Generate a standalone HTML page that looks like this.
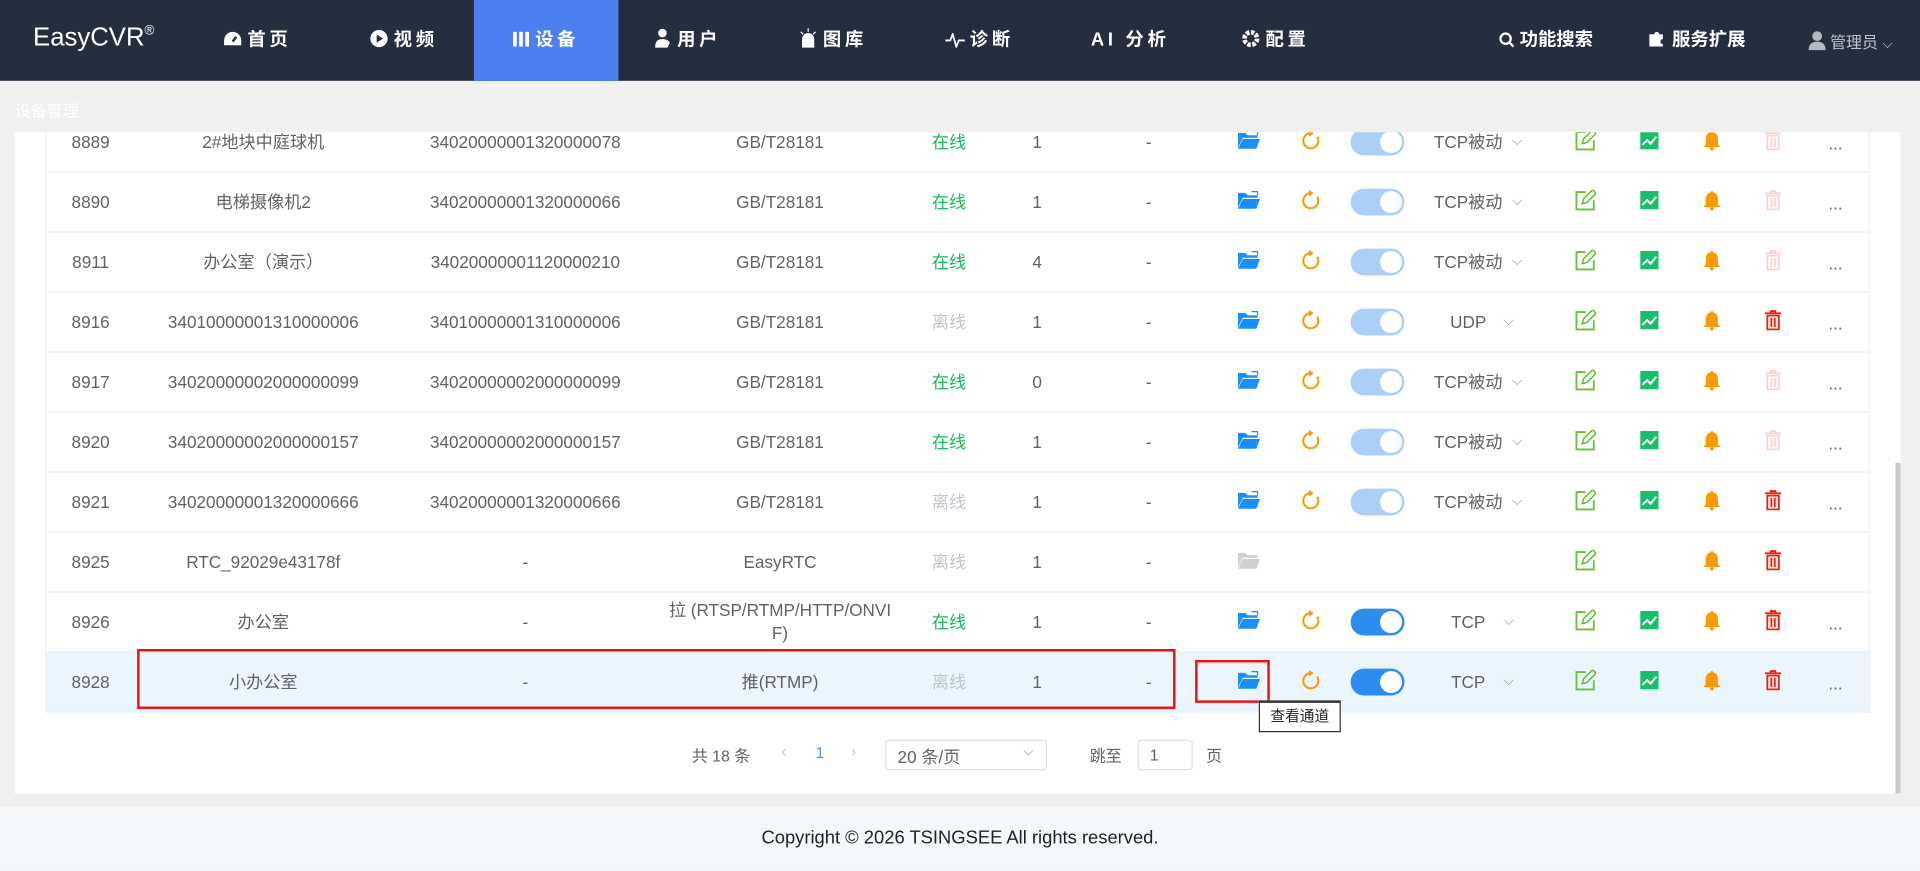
<!DOCTYPE html>
<html><head><meta charset="utf-8">
<style>
*{margin:0;padding:0;box-sizing:border-box}
html,body{width:1920px;height:869px;overflow:hidden;background:#f0f0f0}
#w{position:absolute;left:0;top:0;width:1568px;height:711px;transform:scale(1.22449);transform-origin:0 0;font-family:"Liberation Sans","Noto Sans CJK SC",sans-serif;color:#606266;font-size:14px}
.hd{position:absolute;left:0;top:0;width:1568px;height:66px;background:#252e3e;color:#fff}
.logo{position:absolute;left:27px;top:19px;font-size:21px;color:#fff}
.logo sup{font-size:11px;vertical-align:9px}
.nav{position:absolute;top:0;height:66px;line-height:66px;font-size:15px;font-weight:bold;letter-spacing:3px;text-align:center;color:#fff}
.nav svg{vertical-align:-2px;margin-right:4px}
.act{background:#4e7ff0}
.sub{position:absolute;left:12px;top:80px;font-size:13px;color:#fff}
.panel{position:absolute;left:12px;top:108px;width:1540px;height:540px;background:#fff;overflow:hidden}
.tbl{position:absolute;left:25px;top:-16px;width:1490px;height:490px;border-left:1px solid #ebeef5;border-right:1px solid #ebeef5}
.r{position:absolute;left:0;width:1489px;height:49px;border-bottom:1px solid #ebeef5}
.r span,.r i{position:absolute;top:50%;transform:translate(-50%,-50%);white-space:nowrap;font-style:normal}
.r .d{top:53%}
.on{color:#19b85a}.off{color:#c0c4cc}
.tg{width:44px;height:22px;border-radius:11px;background:#abcff5}
.tg:after{content:"";position:absolute;right:2px;top:2px;width:18px;height:18px;border-radius:50%;background:#fff}
.tg.b{background:#2d8cf0}
.ar{color:#909399;font-size:11px}
.scr{position:absolute;left:1548px;top:378px;width:4px;height:270px;background:#c9c9c9}
.foot{position:absolute;left:0;top:659px;width:1568px;height:52px;background:#f5f8fb;text-align:center;line-height:52px;font-size:15px;color:#222}
</style></head><body><div id="w">
<div class="hd">
<div class="logo">EasyCVR<sup>®</sup></div>
<div class="nav" style="left:170px;width:80px"><svg width="16" height="14" viewBox="0 0 16 14"><path d="M8 1a7 7 0 0 0-7 7v4h14V8a7 7 0 0 0-7-7z" fill="#fff"/><path d="M8 9l3-4" stroke="#252e3e" stroke-width="2"/></svg>首页</div>
<div class="nav" style="left:290px;width:80px"><svg width="15" height="15" viewBox="0 0 16 16"><circle cx="8" cy="8" r="7.5" fill="#fff"/><path d="M6 4.5v7l5.5-3.5z" fill="#252e3e"/></svg>视频</div>
<div class="nav act" style="left:387px;width:118px"><svg width="14" height="14" viewBox="0 0 14 14"><rect x="0" y="1" width="3" height="12" fill="#fff"/><rect x="5" y="1" width="3" height="12" fill="#fff"/><rect x="10" y="1" width="3" height="12" fill="#fff"/></svg>设备</div>
<div class="nav" style="left:522px;width:80px"><svg width="14" height="16" viewBox="0 0 14 16"><circle cx="6" cy="4" r="3.5" fill="#fff"/><path d="M0 16c0-6 3-7 6-7s5 1 6 3l-2 4z" fill="#fff"/></svg>用户</div>
<div class="nav" style="left:640px;width:80px"><svg width="16" height="16" viewBox="0 0 16 16"><path d="M3 15h10M4 14V9a4 4 0 0 1 8 0v5z" stroke="#fff" stroke-width="2" fill="#fff"/><path d="M8 0v3M2 3l2 2M14 3l-2 2" stroke="#fff"/></svg>图库</div>
<div class="nav" style="left:760px;width:80px"><svg width="16" height="12" viewBox="0 0 16 12"><path d="M0 6h4l2-5 3 10 2-5h5" stroke="#fff" stroke-width="1.5" fill="none"/></svg>诊断</div>
<div class="nav" style="left:878px;width:90px">AI 分析</div>
<div class="nav" style="left:1002px;width:80px"><svg width="15" height="15" viewBox="0 0 16 16"><circle cx="8" cy="8" r="5.5" fill="none" stroke="#fff" stroke-width="4" stroke-dasharray="3 1.3"/><circle cx="8" cy="8" r="2" fill="#252e3e"/></svg>配置</div>
<div class="nav" style="left:1215px;width:95px;letter-spacing:0"><svg width="13" height="13" viewBox="0 0 14 14"><circle cx="6" cy="6" r="4.5" stroke="#fff" stroke-width="2" fill="none"/><path d="M9 9l4 4" stroke="#fff" stroke-width="2"/></svg>功能搜索</div>
<div class="nav" style="left:1338px;width:95px;letter-spacing:0"><svg width="16" height="16" viewBox="0 0 16 16"><path d="M2 5h4a2 2 0 1 1 4 0h3v4a2 2 0 1 0 0 4v2H2z" fill="#fff"/></svg>服务扩展</div>
<div style="position:absolute;left:1477px;top:24px;color:#c0c4cc;font-size:13px"><svg width="14" height="16" viewBox="0 0 14 16" style="vertical-align:-2px"><circle cx="7" cy="4.5" r="4" fill="#b4b8c0"/><path d="M0 16c0-5 3-7 7-7s7 2 7 7z" fill="#b4b8c0"/></svg> 管理员 <span style="font-size:11px">⌵</span></div>
</div>
<div class="sub">设备管理</div>
<div class="panel">
<div class="tbl">

<div class="r" style="top:0"><span style="left:36px">8889</span><span style="left:177px">2#地块中庭球机</span><span style="left:391px">34020000001320000078</span><span style="left:599px">GB/T28181</span><span class="on" style="left:737px">在线</span><span style="left:809px">1</span><span style="left:900px">-</span><i style="left:982px"><svg width="18" height="16" viewBox="0 0 18 16"><path d="M0 2h6l2 2h8v2H4L0 14z" fill="#1890ff"/><path d="M4 7h14l-3 8H0z" fill="#1890ff"/><path d="M11 1h5v3" stroke="#1890ff" fill="none"/></svg></i><i style="left:1032px"><svg width="17" height="17" viewBox="0 0 18 18"><path d="M10 3A6.5 6.5 0 1 0 15 6" stroke="#ff9900" stroke-width="1.8" fill="none"/><path d="M8 0l4 3-4 3z" fill="#ff9900"/></svg></i><i class="tg" style="left:1087px"></i><span style="left:1161px">TCP被动</span><span class="ar" style="left:1201px">⌵</span><i style="left:1257px"><svg width="17" height="17" viewBox="0 0 18 18"><path d="M9 2H1v15h15V9" stroke="#67c23a" stroke-width="1.6" fill="none"/><path d="M6 12l1-4 8-8 3 3-8 8z" stroke="#67c23a" stroke-width="1.4" fill="none"/></svg></i><i style="left:1309px"><svg width="15" height="15" viewBox="0 0 16 16"><rect width="16" height="16" fill="#19be6b"/><path d="M2 12l4-4 3 3 5-6" stroke="#fff" stroke-width="1.8" fill="none"/></svg></i><i style="left:1360px"><svg width="16" height="17" viewBox="0 0 16 17"><path d="M8 1a1 1 0 0 1 1 1 5 5 0 0 1 4 5v5l2 2H1l2-2V7a5 5 0 0 1 4-5 1 1 0 0 1 1-1z" fill="#ff9900"/><circle cx="8" cy="15.5" r="1.5" fill="#ff9900"/></svg></i><i style="left:1410px"><svg width="15" height="17" viewBox="0 0 16 18"><path d="M1 3h14M6 3V1h4v2M3 5h10v12H3zM6.5 7v8M9.5 7v8" stroke="#fcd3d3" stroke-width="1.6" fill="none"/></svg></i><span class="d" style="left:1461px">...</span></div>

<div class="r" style="top:49px"><span style="left:36px">8890</span><span style="left:177px">电梯摄像机2</span><span style="left:391px">34020000001320000066</span><span style="left:599px">GB/T28181</span><span class="on" style="left:737px">在线</span><span style="left:809px">1</span><span style="left:900px">-</span><i style="left:982px"><svg width="18" height="16" viewBox="0 0 18 16"><path d="M0 2h6l2 2h8v2H4L0 14z" fill="#1890ff"/><path d="M4 7h14l-3 8H0z" fill="#1890ff"/><path d="M11 1h5v3" stroke="#1890ff" fill="none"/></svg></i><i style="left:1032px"><svg width="17" height="17" viewBox="0 0 18 18"><path d="M10 3A6.5 6.5 0 1 0 15 6" stroke="#ff9900" stroke-width="1.8" fill="none"/><path d="M8 0l4 3-4 3z" fill="#ff9900"/></svg></i><i class="tg" style="left:1087px"></i><span style="left:1161px">TCP被动</span><span class="ar" style="left:1201px">⌵</span><i style="left:1257px"><svg width="17" height="17" viewBox="0 0 18 18"><path d="M9 2H1v15h15V9" stroke="#67c23a" stroke-width="1.6" fill="none"/><path d="M6 12l1-4 8-8 3 3-8 8z" stroke="#67c23a" stroke-width="1.4" fill="none"/></svg></i><i style="left:1309px"><svg width="15" height="15" viewBox="0 0 16 16"><rect width="16" height="16" fill="#19be6b"/><path d="M2 12l4-4 3 3 5-6" stroke="#fff" stroke-width="1.8" fill="none"/></svg></i><i style="left:1360px"><svg width="16" height="17" viewBox="0 0 16 17"><path d="M8 1a1 1 0 0 1 1 1 5 5 0 0 1 4 5v5l2 2H1l2-2V7a5 5 0 0 1 4-5 1 1 0 0 1 1-1z" fill="#ff9900"/><circle cx="8" cy="15.5" r="1.5" fill="#ff9900"/></svg></i><i style="left:1410px"><svg width="15" height="17" viewBox="0 0 16 18"><path d="M1 3h14M6 3V1h4v2M3 5h10v12H3zM6.5 7v8M9.5 7v8" stroke="#fcd3d3" stroke-width="1.6" fill="none"/></svg></i><span class="d" style="left:1461px">...</span></div>

<div class="r" style="top:98px"><span style="left:36px">8911</span><span style="left:177px">办公室（演示）</span><span style="left:391px">34020000001120000210</span><span style="left:599px">GB/T28181</span><span class="on" style="left:737px">在线</span><span style="left:809px">4</span><span style="left:900px">-</span><i style="left:982px"><svg width="18" height="16" viewBox="0 0 18 16"><path d="M0 2h6l2 2h8v2H4L0 14z" fill="#1890ff"/><path d="M4 7h14l-3 8H0z" fill="#1890ff"/><path d="M11 1h5v3" stroke="#1890ff" fill="none"/></svg></i><i style="left:1032px"><svg width="17" height="17" viewBox="0 0 18 18"><path d="M10 3A6.5 6.5 0 1 0 15 6" stroke="#ff9900" stroke-width="1.8" fill="none"/><path d="M8 0l4 3-4 3z" fill="#ff9900"/></svg></i><i class="tg" style="left:1087px"></i><span style="left:1161px">TCP被动</span><span class="ar" style="left:1201px">⌵</span><i style="left:1257px"><svg width="17" height="17" viewBox="0 0 18 18"><path d="M9 2H1v15h15V9" stroke="#67c23a" stroke-width="1.6" fill="none"/><path d="M6 12l1-4 8-8 3 3-8 8z" stroke="#67c23a" stroke-width="1.4" fill="none"/></svg></i><i style="left:1309px"><svg width="15" height="15" viewBox="0 0 16 16"><rect width="16" height="16" fill="#19be6b"/><path d="M2 12l4-4 3 3 5-6" stroke="#fff" stroke-width="1.8" fill="none"/></svg></i><i style="left:1360px"><svg width="16" height="17" viewBox="0 0 16 17"><path d="M8 1a1 1 0 0 1 1 1 5 5 0 0 1 4 5v5l2 2H1l2-2V7a5 5 0 0 1 4-5 1 1 0 0 1 1-1z" fill="#ff9900"/><circle cx="8" cy="15.5" r="1.5" fill="#ff9900"/></svg></i><i style="left:1410px"><svg width="15" height="17" viewBox="0 0 16 18"><path d="M1 3h14M6 3V1h4v2M3 5h10v12H3zM6.5 7v8M9.5 7v8" stroke="#fcd3d3" stroke-width="1.6" fill="none"/></svg></i><span class="d" style="left:1461px">...</span></div>

<div class="r" style="top:147px"><span style="left:36px">8916</span><span style="left:177px">34010000001310000006</span><span style="left:391px">34010000001310000006</span><span style="left:599px">GB/T28181</span><span class="off" style="left:737px">离线</span><span style="left:809px">1</span><span style="left:900px">-</span><i style="left:982px"><svg width="18" height="16" viewBox="0 0 18 16"><path d="M0 2h6l2 2h8v2H4L0 14z" fill="#1890ff"/><path d="M4 7h14l-3 8H0z" fill="#1890ff"/><path d="M11 1h5v3" stroke="#1890ff" fill="none"/></svg></i><i style="left:1032px"><svg width="17" height="17" viewBox="0 0 18 18"><path d="M10 3A6.5 6.5 0 1 0 15 6" stroke="#ff9900" stroke-width="1.8" fill="none"/><path d="M8 0l4 3-4 3z" fill="#ff9900"/></svg></i><i class="tg" style="left:1087px"></i><span style="left:1161px">UDP</span><span class="ar" style="left:1194px">⌵</span><i style="left:1257px"><svg width="17" height="17" viewBox="0 0 18 18"><path d="M9 2H1v15h15V9" stroke="#67c23a" stroke-width="1.6" fill="none"/><path d="M6 12l1-4 8-8 3 3-8 8z" stroke="#67c23a" stroke-width="1.4" fill="none"/></svg></i><i style="left:1309px"><svg width="15" height="15" viewBox="0 0 16 16"><rect width="16" height="16" fill="#19be6b"/><path d="M2 12l4-4 3 3 5-6" stroke="#fff" stroke-width="1.8" fill="none"/></svg></i><i style="left:1360px"><svg width="16" height="17" viewBox="0 0 16 17"><path d="M8 1a1 1 0 0 1 1 1 5 5 0 0 1 4 5v5l2 2H1l2-2V7a5 5 0 0 1 4-5 1 1 0 0 1 1-1z" fill="#ff9900"/><circle cx="8" cy="15.5" r="1.5" fill="#ff9900"/></svg></i><i style="left:1410px"><svg width="15" height="17" viewBox="0 0 16 18"><path d="M1 3h14M6 3V1h4v2M3 5h10v12H3zM6.5 7v8M9.5 7v8" stroke="#f0200f" stroke-width="1.6" fill="none"/></svg></i><span class="d" style="left:1461px">...</span></div>

<div class="r" style="top:196px"><span style="left:36px">8917</span><span style="left:177px">34020000002000000099</span><span style="left:391px">34020000002000000099</span><span style="left:599px">GB/T28181</span><span class="on" style="left:737px">在线</span><span style="left:809px">0</span><span style="left:900px">-</span><i style="left:982px"><svg width="18" height="16" viewBox="0 0 18 16"><path d="M0 2h6l2 2h8v2H4L0 14z" fill="#1890ff"/><path d="M4 7h14l-3 8H0z" fill="#1890ff"/><path d="M11 1h5v3" stroke="#1890ff" fill="none"/></svg></i><i style="left:1032px"><svg width="17" height="17" viewBox="0 0 18 18"><path d="M10 3A6.5 6.5 0 1 0 15 6" stroke="#ff9900" stroke-width="1.8" fill="none"/><path d="M8 0l4 3-4 3z" fill="#ff9900"/></svg></i><i class="tg" style="left:1087px"></i><span style="left:1161px">TCP被动</span><span class="ar" style="left:1201px">⌵</span><i style="left:1257px"><svg width="17" height="17" viewBox="0 0 18 18"><path d="M9 2H1v15h15V9" stroke="#67c23a" stroke-width="1.6" fill="none"/><path d="M6 12l1-4 8-8 3 3-8 8z" stroke="#67c23a" stroke-width="1.4" fill="none"/></svg></i><i style="left:1309px"><svg width="15" height="15" viewBox="0 0 16 16"><rect width="16" height="16" fill="#19be6b"/><path d="M2 12l4-4 3 3 5-6" stroke="#fff" stroke-width="1.8" fill="none"/></svg></i><i style="left:1360px"><svg width="16" height="17" viewBox="0 0 16 17"><path d="M8 1a1 1 0 0 1 1 1 5 5 0 0 1 4 5v5l2 2H1l2-2V7a5 5 0 0 1 4-5 1 1 0 0 1 1-1z" fill="#ff9900"/><circle cx="8" cy="15.5" r="1.5" fill="#ff9900"/></svg></i><i style="left:1410px"><svg width="15" height="17" viewBox="0 0 16 18"><path d="M1 3h14M6 3V1h4v2M3 5h10v12H3zM6.5 7v8M9.5 7v8" stroke="#fcd3d3" stroke-width="1.6" fill="none"/></svg></i><span class="d" style="left:1461px">...</span></div>

<div class="r" style="top:245px"><span style="left:36px">8920</span><span style="left:177px">34020000002000000157</span><span style="left:391px">34020000002000000157</span><span style="left:599px">GB/T28181</span><span class="on" style="left:737px">在线</span><span style="left:809px">1</span><span style="left:900px">-</span><i style="left:982px"><svg width="18" height="16" viewBox="0 0 18 16"><path d="M0 2h6l2 2h8v2H4L0 14z" fill="#1890ff"/><path d="M4 7h14l-3 8H0z" fill="#1890ff"/><path d="M11 1h5v3" stroke="#1890ff" fill="none"/></svg></i><i style="left:1032px"><svg width="17" height="17" viewBox="0 0 18 18"><path d="M10 3A6.5 6.5 0 1 0 15 6" stroke="#ff9900" stroke-width="1.8" fill="none"/><path d="M8 0l4 3-4 3z" fill="#ff9900"/></svg></i><i class="tg" style="left:1087px"></i><span style="left:1161px">TCP被动</span><span class="ar" style="left:1201px">⌵</span><i style="left:1257px"><svg width="17" height="17" viewBox="0 0 18 18"><path d="M9 2H1v15h15V9" stroke="#67c23a" stroke-width="1.6" fill="none"/><path d="M6 12l1-4 8-8 3 3-8 8z" stroke="#67c23a" stroke-width="1.4" fill="none"/></svg></i><i style="left:1309px"><svg width="15" height="15" viewBox="0 0 16 16"><rect width="16" height="16" fill="#19be6b"/><path d="M2 12l4-4 3 3 5-6" stroke="#fff" stroke-width="1.8" fill="none"/></svg></i><i style="left:1360px"><svg width="16" height="17" viewBox="0 0 16 17"><path d="M8 1a1 1 0 0 1 1 1 5 5 0 0 1 4 5v5l2 2H1l2-2V7a5 5 0 0 1 4-5 1 1 0 0 1 1-1z" fill="#ff9900"/><circle cx="8" cy="15.5" r="1.5" fill="#ff9900"/></svg></i><i style="left:1410px"><svg width="15" height="17" viewBox="0 0 16 18"><path d="M1 3h14M6 3V1h4v2M3 5h10v12H3zM6.5 7v8M9.5 7v8" stroke="#fcd3d3" stroke-width="1.6" fill="none"/></svg></i><span class="d" style="left:1461px">...</span></div>

<div class="r" style="top:294px"><span style="left:36px">8921</span><span style="left:177px">34020000001320000666</span><span style="left:391px">34020000001320000666</span><span style="left:599px">GB/T28181</span><span class="off" style="left:737px">离线</span><span style="left:809px">1</span><span style="left:900px">-</span><i style="left:982px"><svg width="18" height="16" viewBox="0 0 18 16"><path d="M0 2h6l2 2h8v2H4L0 14z" fill="#1890ff"/><path d="M4 7h14l-3 8H0z" fill="#1890ff"/><path d="M11 1h5v3" stroke="#1890ff" fill="none"/></svg></i><i style="left:1032px"><svg width="17" height="17" viewBox="0 0 18 18"><path d="M10 3A6.5 6.5 0 1 0 15 6" stroke="#ff9900" stroke-width="1.8" fill="none"/><path d="M8 0l4 3-4 3z" fill="#ff9900"/></svg></i><i class="tg" style="left:1087px"></i><span style="left:1161px">TCP被动</span><span class="ar" style="left:1201px">⌵</span><i style="left:1257px"><svg width="17" height="17" viewBox="0 0 18 18"><path d="M9 2H1v15h15V9" stroke="#67c23a" stroke-width="1.6" fill="none"/><path d="M6 12l1-4 8-8 3 3-8 8z" stroke="#67c23a" stroke-width="1.4" fill="none"/></svg></i><i style="left:1309px"><svg width="15" height="15" viewBox="0 0 16 16"><rect width="16" height="16" fill="#19be6b"/><path d="M2 12l4-4 3 3 5-6" stroke="#fff" stroke-width="1.8" fill="none"/></svg></i><i style="left:1360px"><svg width="16" height="17" viewBox="0 0 16 17"><path d="M8 1a1 1 0 0 1 1 1 5 5 0 0 1 4 5v5l2 2H1l2-2V7a5 5 0 0 1 4-5 1 1 0 0 1 1-1z" fill="#ff9900"/><circle cx="8" cy="15.5" r="1.5" fill="#ff9900"/></svg></i><i style="left:1410px"><svg width="15" height="17" viewBox="0 0 16 18"><path d="M1 3h14M6 3V1h4v2M3 5h10v12H3zM6.5 7v8M9.5 7v8" stroke="#f0200f" stroke-width="1.6" fill="none"/></svg></i><span class="d" style="left:1461px">...</span></div>

<div class="r" style="top:343px"><span style="left:36px">8925</span><span style="left:177px">RTC_92029e43178f</span><span style="left:391px">-</span><span style="left:599px">EasyRTC</span><span class="off" style="left:737px">离线</span><span style="left:809px">1</span><span style="left:900px">-</span><i style="left:982px"><svg width="18" height="16" viewBox="0 0 18 16"><path d="M0 2h6l2 2h8v2H4L0 14z" fill="#d0d0d0"/><path d="M4 7h14l-3 8H0z" fill="#d0d0d0"/></svg></i><i style="left:1257px"><svg width="17" height="17" viewBox="0 0 18 18"><path d="M9 2H1v15h15V9" stroke="#67c23a" stroke-width="1.6" fill="none"/><path d="M6 12l1-4 8-8 3 3-8 8z" stroke="#67c23a" stroke-width="1.4" fill="none"/></svg></i><i style="left:1360px"><svg width="16" height="17" viewBox="0 0 16 17"><path d="M8 1a1 1 0 0 1 1 1 5 5 0 0 1 4 5v5l2 2H1l2-2V7a5 5 0 0 1 4-5 1 1 0 0 1 1-1z" fill="#ff9900"/><circle cx="8" cy="15.5" r="1.5" fill="#ff9900"/></svg></i><i style="left:1410px"><svg width="15" height="17" viewBox="0 0 16 18"><path d="M1 3h14M6 3V1h4v2M3 5h10v12H3zM6.5 7v8M9.5 7v8" stroke="#f0200f" stroke-width="1.6" fill="none"/></svg></i></div>

<div class="r" style="top:392px"><span style="left:36px">8926</span><span style="left:177px">办公室</span><span style="left:391px">-</span><span style="left:599px;text-align:center;line-height:19px">拉 (RTSP/RTMP/HTTP/ONVI<br>F)</span><span class="on" style="left:737px">在线</span><span style="left:809px">1</span><span style="left:900px">-</span><i style="left:982px"><svg width="18" height="16" viewBox="0 0 18 16"><path d="M0 2h6l2 2h8v2H4L0 14z" fill="#1890ff"/><path d="M4 7h14l-3 8H0z" fill="#1890ff"/><path d="M11 1h5v3" stroke="#1890ff" fill="none"/></svg></i><i style="left:1032px"><svg width="17" height="17" viewBox="0 0 18 18"><path d="M10 3A6.5 6.5 0 1 0 15 6" stroke="#ff9900" stroke-width="1.8" fill="none"/><path d="M8 0l4 3-4 3z" fill="#ff9900"/></svg></i><i class="tg b" style="left:1087px"></i><span style="left:1161px">TCP</span><span class="ar" style="left:1194px">⌵</span><i style="left:1257px"><svg width="17" height="17" viewBox="0 0 18 18"><path d="M9 2H1v15h15V9" stroke="#67c23a" stroke-width="1.6" fill="none"/><path d="M6 12l1-4 8-8 3 3-8 8z" stroke="#67c23a" stroke-width="1.4" fill="none"/></svg></i><i style="left:1309px"><svg width="15" height="15" viewBox="0 0 16 16"><rect width="16" height="16" fill="#19be6b"/><path d="M2 12l4-4 3 3 5-6" stroke="#fff" stroke-width="1.8" fill="none"/></svg></i><i style="left:1360px"><svg width="16" height="17" viewBox="0 0 16 17"><path d="M8 1a1 1 0 0 1 1 1 5 5 0 0 1 4 5v5l2 2H1l2-2V7a5 5 0 0 1 4-5 1 1 0 0 1 1-1z" fill="#ff9900"/><circle cx="8" cy="15.5" r="1.5" fill="#ff9900"/></svg></i><i style="left:1410px"><svg width="15" height="17" viewBox="0 0 16 18"><path d="M1 3h14M6 3V1h4v2M3 5h10v12H3zM6.5 7v8M9.5 7v8" stroke="#f0200f" stroke-width="1.6" fill="none"/></svg></i><span class="d" style="left:1461px">...</span></div>

<div class="r" style="top:441px;background:#eaf5fd"><span style="left:36px">8928</span><span style="left:177px">小办公室</span><span style="left:391px">-</span><span style="left:599px">推(RTMP)</span><span class="off" style="left:737px">离线</span><span style="left:809px">1</span><span style="left:900px">-</span><i style="left:982px"><svg width="18" height="16" viewBox="0 0 18 16"><path d="M0 2h6l2 2h8v2H4L0 14z" fill="#1890ff"/><path d="M4 7h14l-3 8H0z" fill="#1890ff"/><path d="M11 1h5v3" stroke="#1890ff" fill="none"/></svg></i><i style="left:1032px"><svg width="17" height="17" viewBox="0 0 18 18"><path d="M10 3A6.5 6.5 0 1 0 15 6" stroke="#ff9900" stroke-width="1.8" fill="none"/><path d="M8 0l4 3-4 3z" fill="#ff9900"/></svg></i><i class="tg b" style="left:1087px"></i><span style="left:1161px">TCP</span><span class="ar" style="left:1194px">⌵</span><i style="left:1257px"><svg width="17" height="17" viewBox="0 0 18 18"><path d="M9 2H1v15h15V9" stroke="#67c23a" stroke-width="1.6" fill="none"/><path d="M6 12l1-4 8-8 3 3-8 8z" stroke="#67c23a" stroke-width="1.4" fill="none"/></svg></i><i style="left:1309px"><svg width="15" height="15" viewBox="0 0 16 16"><rect width="16" height="16" fill="#19be6b"/><path d="M2 12l4-4 3 3 5-6" stroke="#fff" stroke-width="1.8" fill="none"/></svg></i><i style="left:1360px"><svg width="16" height="17" viewBox="0 0 16 17"><path d="M8 1a1 1 0 0 1 1 1 5 5 0 0 1 4 5v5l2 2H1l2-2V7a5 5 0 0 1 4-5 1 1 0 0 1 1-1z" fill="#ff9900"/><circle cx="8" cy="15.5" r="1.5" fill="#ff9900"/></svg></i><i style="left:1410px"><svg width="15" height="17" viewBox="0 0 16 18"><path d="M1 3h14M6 3V1h4v2M3 5h10v12H3zM6.5 7v8M9.5 7v8" stroke="#f0200f" stroke-width="1.6" fill="none"/></svg></i><span class="d" style="left:1461px">...</span></div>

</div>
<div style="position:absolute;left:553px;top:499px;font-size:13px">共 18 条</div>
<div style="position:absolute;left:626px;top:498px;font-size:13px;color:#c0c4cc">‹</div>
<div style="position:absolute;left:654px;top:499px;font-size:13px;color:#409eff">1</div>
<div style="position:absolute;left:683px;top:498px;font-size:13px;color:#c0c4cc">›</div>
<div style="position:absolute;left:711px;top:496px;width:132px;height:25px;border:1px solid #dcdfe6;border-radius:3px;font-size:14px;padding:3px 0 0 9px">20 条/页<span style="position:absolute;right:10px;top:3px;font-size:11px;color:#909399">⌵</span></div>
<div style="position:absolute;left:878px;top:499px;font-size:13px">跳至</div>
<div style="position:absolute;left:917px;top:496px;width:45px;height:25px;border:1px solid #dcdfe6;border-radius:3px;font-size:13px;padding:4px 0 0 9px">1</div>
<div style="position:absolute;left:973px;top:499px;font-size:13px">页</div>
</div>
<div class="scr"></div>
<div style="position:absolute;left:112px;top:530px;width:848px;height:49px;border:2px solid #f01010"></div>
<div style="position:absolute;left:976px;top:539px;width:61px;height:35px;border:2px solid #f01010"></div>
<div style="position:absolute;left:1028px;top:572px;width:67px;height:26px;border:1px solid #333;border-top-width:2px;background:#fff;font-size:12px;color:#222;text-align:center;line-height:23px">查看通道</div>
<div class="foot">Copyright © 2026 TSINGSEE All rights reserved.</div>
</div></body></html>
